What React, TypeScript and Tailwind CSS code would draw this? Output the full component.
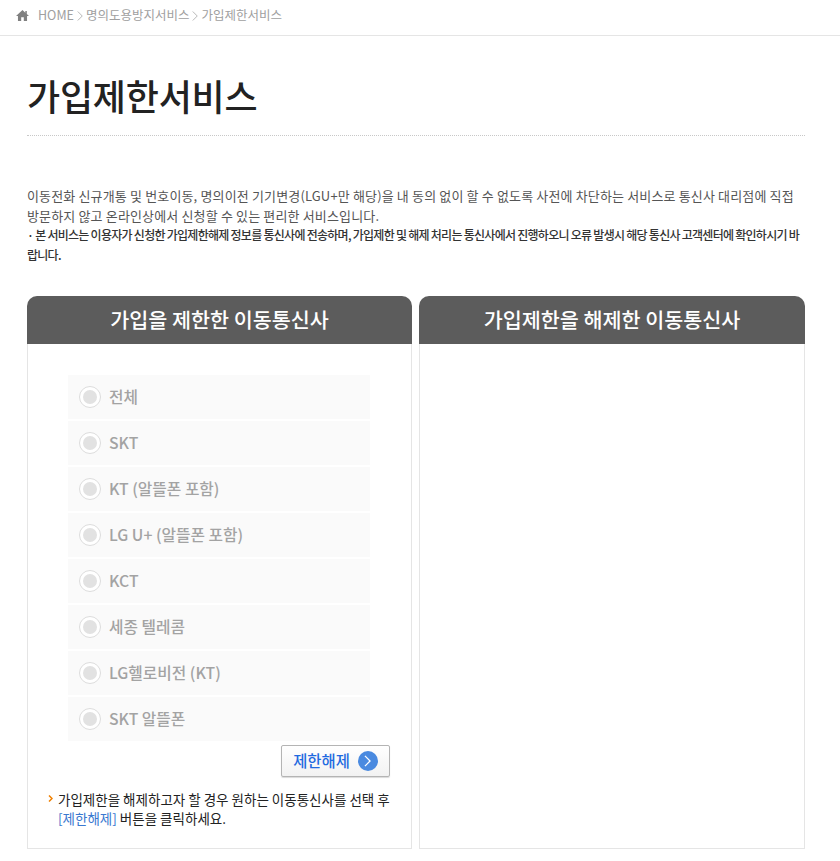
import React from "react";

const carriers = ["전체", "SKT", "KT (알뜰폰 포함)", "LG U+ (알뜰폰 포함)", "KCT", "세종 텔레콤", "LG헬로비전 (KT)", "SKT 알뜰폰"];

const font = "font-['Noto_Sans_CJK_KR','Noto_Sans',sans-serif]";

const Chevron = ({ className, width = 1 }: { className?: string; width?: number }) => (
  <svg className={className} viewBox="0 0 8 14" fill="none" stroke="currentColor" strokeWidth={width}>
    <path d="M1 1l6 6-6 6" />
  </svg>
);

const App = () => {
  return (
    <div className={`w-[840px] h-[861px] overflow-hidden bg-white ${font}`}>
      <div className="h-9 border-b border-[#e5e5e5] flex items-center pl-4 text-[12.5px] text-[#a0a0a0] pb-[4px]">
        <svg className="w-[13px] h-[13px] text-[#808080] mr-[9px]" viewBox="0 0 12 12" fill="currentColor">
          <path d="M6 1L0 6.5h1.8V11h3V7.6h2.4V11h3V6.5H12L10 4.7V1.8H8.6v1.6z" />
        </svg>
        <span>HOME</span>
        <Chevron className="w-[6px] h-3 mx-[3px]" />
        <span>명의도용방지서비스</span>
        <Chevron className="w-[6px] h-3 mx-[3px]" />
        <span>가입제한서비스</span>
      </div>

      <div className="px-[27px]">
        <h1 className="h-[100px] border-b border-dotted border-[#c8c8c8] text-[36px] font-medium text-[#222222] leading-[120px] tracking-[-0.2px] w-[778px] overflow-hidden">
          <span className="block -mt-[1px]">가입제한서비스</span>
        </h1>

        <div className="mt-[50px] w-[778px] text-[13px] leading-[19.6px] text-[#555555]">
          <p className="tracking-[0.15px]">
            이동전화 신규개통 및 번호이동, 명의이전 기기변경(LGU+만 해당)을 내 동의 없이 할 수 없도록 사전에 차단하는 서비스로 통신사 대리점에 직접 방문하지 않고 온라인상에서 신청할 수 있는 편리한 서비스입니다.
          </p>
          <p className="text-[12px] text-[#333333] font-medium tracking-[-0.73px]">
            · 본 서비스는 이용자가 신청한 가입제한해제 정보를 통신사에 전송하며, 가입제한 및 해제 처리는 통신사에서 진행하오니 오류 발생시 해당 통신사 고객센터에 확인하시기 바랍니다.
          </p>
        </div>

        <div className="mt-[32px] flex gap-[7px]">
          <section className="w-[385px] h-[553px] flex flex-col">
            <h2 className="h-12 pb-[2px] bg-[#5c5c5c] rounded-t-[10px] text-white text-[20.7px] font-medium flex items-center justify-center">
              가입을 제한한 이동통신사
            </h2>
            <div className="flex-1 border border-t-0 border-[#e5e5e5] pt-[31px] pl-[40px] pr-[21px]">
              <ul className="flex flex-col gap-[2px] w-[302px]">
                {carriers.map((name) => (
                  <li key={name} className="h-11 bg-[#fafafa] flex items-center pl-[11px] gap-[8px] text-[15.75px] font-medium text-[#a3a3a3]">
                    <span className="w-[22px] h-[22px] rounded-full border border-[#dddddd] bg-white flex items-center justify-center">
                      <span className="w-[14px] h-[14px] rounded-full bg-[#e2e2e2]" />
                    </span>
                    <span className="-mt-[2px]">{name}</span>
                  </li>
                ))}
              </ul>
              <div className="flex justify-end mt-[4px]">
                <button className="w-[109px] h-8 rounded-[2px] border border-[#b4b4b4] bg-gradient-to-b from-white to-[#f2f2f2] shadow-[0_1px_1px_rgba(0,0,0,0.15)] flex items-center justify-center gap-2 text-[15.4px] font-medium text-[#1f6ae0]">
                  <span className="-mt-[1px]">제한해제</span>
                  <span className="w-5 h-5 rounded-full bg-[#4a8ae0] text-white flex items-center justify-center">
                    <Chevron className="w-[7px] h-[12px]" width={1.5} />
                  </span>
                </button>
              </div>
              <div className="relative mt-[13px] pl-[10px] -ml-[20px] -mr-[2px] text-[13.5px] leading-[19px] text-[#222222] whitespace-nowrap">
                <Chevron className="absolute left-0 top-[5px] w-[5px] h-[7px] text-[#f08000]" width={3} />
                가입제한을 해제하고자 할 경우 원하는 이동통신사를 선택 후
                <br />
                <span className="text-[#3a78d0]">[제한해제]</span> 버튼을 클릭하세요.
              </div>
            </div>
          </section>

          <section className="w-[386px] h-[553px] flex flex-col">
            <h2 className="h-12 pb-[2px] bg-[#5c5c5c] rounded-t-[10px] text-white text-[20.7px] font-medium flex items-center justify-center">
              가입제한을 해제한 이동통신사
            </h2>
            <div className="flex-1 border border-t-0 border-[#e5e5e5]" />
          </section>
        </div>
      </div>
    </div>
  );
};

export default App;
